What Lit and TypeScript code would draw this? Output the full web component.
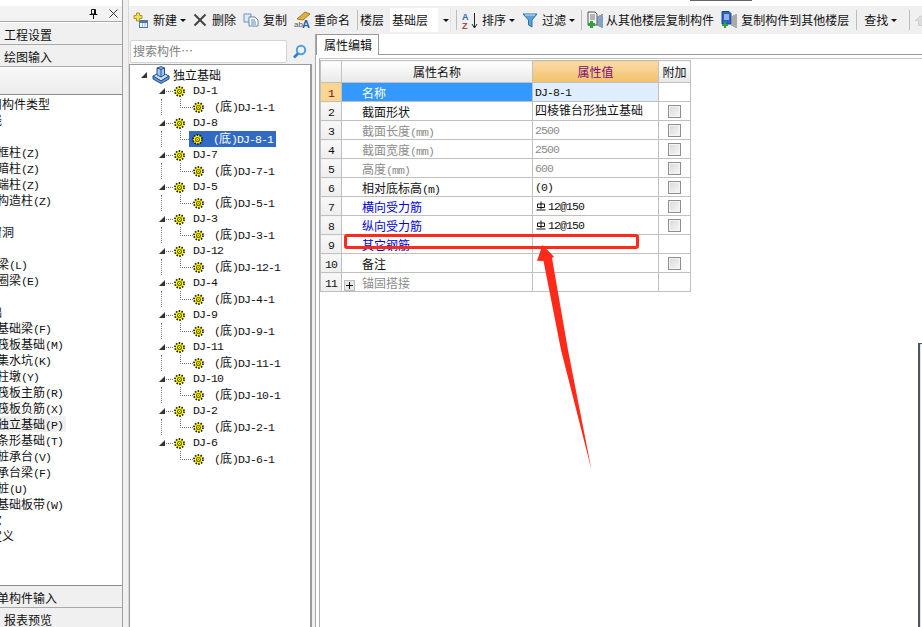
import { LitElement, html, css, svg } from "lit";
import { customElement } from "lit/decorators.js";

const mixed = (t: string) =>
  t.split(/([\x20-\x7e]+)/).map((p, i) => (i % 2 ? html`<span class="l">${p}</span>` : p));

const gear = html`<svg class="gear" width="11" height="11" viewBox="0 0 11 11">
  <circle cx="5.5" cy="5.5" r="4.4" fill="#ffff00"/>
  <circle cx="5.5" cy="5.5" r="4.5" fill="none" stroke="#1c1c10" stroke-width="1.8" stroke-dasharray="1.5 1.33"/>
  <circle cx="5.5" cy="5.5" r="2" fill="#ffff00" stroke="#6e6410" stroke-width="1.1"/>
  <rect x="5" y="5" width="1" height="1" fill="#555"/>
</svg>`;
const tri = html`<svg class="tri" width="6" height="6" viewBox="0 0 6 6"><path d="M6 0V6H0Z" fill="#333"/></svg>`;
const caret = html`<svg class="caret" width="6" height="3" viewBox="0 0 6 3"><path d="M0 0H6L3 3Z" fill="#111"/></svg>`;
const rebar = html`<svg class="rebar" width="10" height="10" viewBox="0 0 10 10" fill="none" stroke="#111">
  <path d="M1.5 3H8.5V6.5H1.5Z"/><path d="M5 0.5V8M0.5 9H9.5"/></svg>`;

const newIcon = html`<svg width="15" height="16" viewBox="0 0 15 16">
  <rect x="6.5" y="8.5" width="8" height="7" fill="#fff" stroke="#4a78b0"/><path d="M7 10H14" stroke="#4a78b0" stroke-width="2"/><path d="M9.5 11V15M12 11V15" stroke="#9ab8d8"/>
  <path d="M3.5 1H6.5V3.5H9V6.5H6.5V9H3.5V6.5H1V3.5H3.5Z" fill="#f7e050" stroke="#a89430"/></svg>`;
const delIcon = html`<svg width="14" height="14" viewBox="0 0 14 14"><path d="M1.5 1.5L12.5 12.5M12.5 1.5L1.5 12.5" stroke="#444" stroke-width="2"/></svg>`;
const copyIcon = html`<svg width="16" height="14" viewBox="0 0 16 14">
  <path d="M1 1H8V9H1Z" fill="#dfeaf6" stroke="#6f93bd"/><path d="M6 4H12L15 7V13H6Z" fill="#fff" stroke="#5c84b4"/>
  <path d="M8 7H12M8 9H13M8 11H13" stroke="#5c84b4"/></svg>`;
const renameIcon = html`<svg width="17" height="18" viewBox="0 0 17 18">
  <path d="M3 8L11 1L16 3L9 9Z" fill="#e0b040" stroke="#a87c20"/>
  <text x="0" y="16" font-size="8" fill="#555" font-family="Liberation Sans">ab</text>
  <text x="8" y="17" font-size="11" font-weight="700" fill="#2f5fa8" font-family="Liberation Sans">A</text></svg>`;
const sortIcon = html`<svg width="16" height="17" viewBox="0 0 16 17">
  <text x="0" y="8" font-size="9" font-weight="700" fill="#3a68a8" font-family="Liberation Sans">A</text>
  <text x="0" y="16.5" font-size="9" font-weight="700" fill="#a04848" font-family="Liberation Sans">Z</text>
  <path d="M12.5 1V15M10 12L12.5 16L15 12" fill="none" stroke="#222"/></svg>`;
const filterIcon = html`<svg width="16" height="15" viewBox="0 0 16 15"><path d="M1 1H15L10 7V14L6.5 12V7Z" fill="#5da2d8" stroke="#2f70a8"/><path d="M3 2H13" stroke="#cfe6f6"/></svg>`;
const fromIcon = html`<svg width="17" height="18" viewBox="0 0 17 18">
  <path d="M1 1H8L10 3V14H1Z" fill="#f2f2f2" stroke="#555"/><path d="M3 4H8M3 6H8M3 8H8" stroke="#777"/>
  <path d="M3 10H6V12H8V15H6V17H3V15H1V12H3Z" fill="#2ea43c"/>
  <path d="M11 5V15M13 4V16M15 3V17" stroke="#5b7fa8" stroke-width="1.4"/></svg>`;
const toIcon = html`<svg width="17" height="18" viewBox="0 0 17 18">
  <path d="M1 0.5H8L10 2.5V13H1Z" fill="#2a62c8" stroke="#1c4494"/><path d="M3 4H8M3 6H8M3 8H8" stroke="#fff"/>
  <path d="M3 11H5V13H7V15H5V17H3V15H1V13H3Z" fill="#2ea43c"/>
  <path d="M11 5V15M13 4V16M15 3V17" stroke="#8c8c8c" stroke-width="1.4"/></svg>`;
const upIcon = html`<svg width="11" height="11" viewBox="0 0 11 11"><path d="M5.5 0.5L10.5 5.5H7.5V10.5H3.5V5.5H0.5Z" fill="#dcdcdc" stroke="#cfcfcf"/></svg>`;
const cubeIcon = html`<svg width="18" height="18" viewBox="0 0 18 18">
  <path d="M1 10L9 6L17 10L9 15Z" fill="#cfe0f4" stroke="#1f4f96"/>
  <path d="M1 10V13L9 17.5L17 13V10L9 15Z" fill="#6a9ad4" stroke="#1f4f96"/>
  <path d="M5 2L9 0.6L12.5 2V9L9 11L5 9Z" fill="#a8c6ea" stroke="#1f4f96"/>
  <path d="M9 3V11M5 2L9 3.4L12.5 2" fill="none" stroke="#1f4f96"/></svg>`;
const searchIcon = html`<svg width="15" height="15" viewBox="0 0 15 15" fill="none">
  <circle cx="9" cy="6" r="4.2" stroke="#4d9fe0" stroke-width="2"/><path d="M6 9.5L2 13.5" stroke="#2f7fc8" stroke-width="2.6"/></svg>`;
const pinIcon = html`<svg width="9" height="10" viewBox="0 0 9 10"><path d="M2.5 0.5H6.5V5H2.5ZM0.5 5.5H8.5M4.5 6V10M5.5 1V5" fill="none" stroke="#111"/></svg>`;
const closeIcon = html`<svg width="9" height="9" viewBox="0 0 9 9"><path d="M0.5 0.5L8.5 8.5M8.5 0.5L0.5 8.5" stroke="#333"/></svg>`;

const list: [number, string][] = [
  [1, "常用构件类型"], [1, "轴线"], [1, "柱"], [2, "框柱(Z)"], [2, "暗柱(Z)"], [2, "端柱(Z)"], [2, "构造柱(Z)"],
  [1, "墙"], [1, "门窗洞"], [1, "梁"], [2, "梁(L)"], [2, "圈梁(E)"], [1, "板"], [1, "基础"],
  [2, "基础梁(F)"], [2, "筏板基础(M)"], [2, "集水坑(K)"], [2, "柱墩(Y)"], [2, "筏板主筋(R)"], [2, "筏板负筋(X)"],
  [2, "独立基础(P)"], [2, "条形基础(T)"], [2, "桩承台(V)"], [2, "承台梁(F)"], [2, "桩(U)"], [2, "基础板带(W)"],
  [1, "其它"], [1, "自定义"],
];
const tree = ["1", "8", "7", "5", "3", "12", "4", "9", "11", "10", "2", "6"];

type Row = [string, string, string, boolean];
const rows: Row[] = [
  ["名称", "DJ-8-1", "sel", false],
  ["截面形状", "四棱锥台形独立基础", "", true],
  ["截面长度(mm)", "2500", "gray", true],
  ["截面宽度(mm)", "2500", "gray", true],
  ["高度(mm)", "600", "gray", true],
  ["相对底标高(m)", "(0)", "", true],
  ["横向受力筋", "@12@150", "blue", true],
  ["纵向受力筋", "@12@150", "blue", true],
  ["其它钢筋", "", "blue", false],
  ["备注", "", "", true],
  ["锚固搭接", "", "gray expand", false],
];

@customElement("app-root")
export class AppRoot extends LitElement {
  static styles = css`
    :host { display: block; position: relative; width: 922px; height: 627px; overflow: hidden; background: #fff;
      font: 12px/16px "Noto Sans CJK SC", "Liberation Sans", sans-serif; color: #111; }
    .l { font: 11.5px/0 "Liberation Mono", monospace; letter-spacing: -0.9px; }
    .app { display: flex; height: 627px; }

    .left { width: 123px; flex: none; padding-top: 6px; display: flex; flex-direction: column; box-sizing: border-box; border-right: 1px solid #a0a0a0; }
    .lhead { height: 15px; flex: none; background: #f3f3f3; border-bottom: 1px solid #a8a8a8; display: flex; align-items: center; justify-content: flex-end; gap: 11px; padding-right: 4px; }
    .ltab { height: 21px; flex: none; background: #f0f0f0; border-bottom: 1px solid #a8a8a8; padding-left: 4px; line-height: 23px; white-space: nowrap; overflow: hidden; }
    .ltab.first { margin-top: 1px; }
    .ltab.clip { padding-left: 0; text-indent: -3px; }
    .lpanel { height: 26px; flex: none; margin-top: 1px; background: linear-gradient(#f8f8f8, #ececec); border-bottom: 1px solid #8c8c8c; }
    .list { height: 491px; flex: none; padding-top: 1px; box-sizing: border-box; overflow: hidden; background: #fff; border-bottom: 1px solid #8c8c8c; }
    .item { height: 16px; line-height: 16px; white-space: nowrap; width: max-content; }
    .item.lv1 { margin-left: -22px; }
    .item.lv2 { margin-left: -3px; }
    .item.on { background: #f0f0f0; border-radius: 2px; padding-right: 3px; }
    .gut { width: 5px; flex: none; background: #f0f0f0; border-right: 1px solid #d8d8d8; }

    .right { flex: 1; min-width: 0; display: flex; flex-direction: column; padding-top: 6px; }
    .toolbar { height: 28px; flex: none; background: #f0f0f0; display: flex; align-items: center; padding-left: 4px; white-space: nowrap; }
    .toolbar > * { flex: none; }
    .btn { display: flex; align-items: center; margin-right: 7px; }
    .btn > svg:first-child { flex: none; margin-right: 5px; }
    .btn.i4 > svg:first-child { margin-right: 4px; }
    .btn.i3 > svg:first-child { margin-right: 3px; }
    .btn.i2 > svg:first-child { margin-right: 2px; }
    .btn.ml2 { margin-left: 2px; }
    .btn.mr6 { margin-right: 6px; }
    .caret { margin-left: 3px; }
    .sep { width: 1px; height: 20px; background: #bdbdbd; margin-right: 3px; }
    .sep.m5 { margin-right: 5px; }
    .sep.m7 { margin-right: 7px; }
    .sep.m2 { margin-right: 2px; }
    .combo { width: 61px; height: 24px; background: #fff; margin: 0 5px 0 6px; display: flex; align-items: center; padding-left: 2px; box-sizing: border-box; justify-content: space-between; }
    .combo span { flex: 1; }
    .combo i { width: 12px; height: 100%; display: flex; align-items: center; justify-content: center; background: #f4f4f4; border-right: 1px solid #e4e4e4; }

    .body { flex: 1; display: flex; min-height: 0; }
    .tcol { width: 183px; flex: none; background: #f0f0f0; display: flex; flex-direction: column; }
    .search { height: 30px; flex: none; display: flex; align-items: center; padding: 4px 0 0 1px; box-sizing: border-box; gap: 5px; }
    .sinput { width: 157px; height: 23px; background: #fff; border: 1px solid #d4d4d4; border-radius: 2px; box-sizing: border-box; color: #808080; line-height: 20px; padding-left: 2px; }
    .tree { flex: 1; background: #fff; border: 1px solid #9a9a9a; border-width: 1px 2px 0 1px; overflow: hidden; padding-top: 1px; }
    .node { height: 16px; display: flex; align-items: center; white-space: nowrap; }
    .root { height: 17px; padding-left: 11px; }
    .root .tri { margin-right: 5px; }
    .root span.t { margin-left: 3px; line-height: 14px; }
    .par { padding-left: 29px; }
    .par .l { line-height: 14px; }
    .dots { width: 7px; border-top: 1px dotted #777; margin: 0 1px; }
    .par .gear { margin-right: 8px; }
    .chi { align-items: stretch; }
    .vl { width: 0; margin-left: 31px; border-left: 1px dotted #888; }
    .vl.none { border-left-color: transparent; }
    .elbow { width: 12px; height: 8px; margin-left: 18px; border-left: 1px dotted #777; border-bottom: 1px dotted #777; flex: none; }
    .chi .gear { align-self: center; }
    .label { margin-left: 10px; padding: 0 6px 0 0; align-self: stretch; line-height: 13px; }
    .hl { display: flex; align-items: center; background: #316ac5; color: #fff; padding-left: 3px; height: 16px; margin-left: -4px; width: 87px; box-sizing: border-box; }
    .hl .label { padding: 0; }

    .gap { width: 4px; flex: none; background: #f0f0f0; border-right: 1px solid #a8a8a8; box-sizing: border-box; }
    .panel { flex: 1; min-width: 0; display: flex; flex-direction: column; position: relative; }
    .tabs { height: 21px; flex: none; display: flex; }
    .tab { width: 63px; height: 21px; box-sizing: border-box; border: 1px solid #9a9a9a; border-bottom: none; line-height: 20px; padding-left: 7px; background: #fff; }
    .tabline { flex: 1; border-bottom: 1px solid #9a9a9a; }
    .grid { flex: 1; margin: 3px 0 0 3px; border-top: 1px solid #c4c4c4; border-left: 1px solid #b0b0b0; padding-top: 1px; position: relative; }
    table { border-collapse: collapse; table-layout: fixed; width: 370px; }
    col.c1 { width: 21px; }
    col.c2 { width: 191px; }
    col.c3 { width: 126px; }
    col.c4 { width: 32px; }
    td, th { border: 1px solid #c0c0c0; padding: 0; font-weight: 400; white-space: nowrap; overflow: hidden; box-sizing: border-box; }
    th { height: 22px; background: linear-gradient(#ffffff, #e8e8e8); line-height: 19px; }
    th.val { background: linear-gradient(#fbdca6, #f2c16a); color: #7a0a7a; }
    .c { height: 18px; line-height: 19px; overflow: hidden; }
    td.n { text-align: center; background: linear-gradient(#f8f8f8, #eeeeee); }
    td.n .c { line-height: 17px; }
    td.n.cur { background: #fcd58f; color: #7a0a30; }
    td.name .c { padding-left: 20px; }
    td.val .c { padding-left: 2px; line-height: 16px; }
    tr.sel td.name { background: #3399ff; color: #fff; }
    tr.sel td.val { background: #deeeff; }
    tr.gray td.name, tr.gray td.val { color: #8c8c8c; }
    tr.blue td.name { color: #0000e0; }
    .plus { display: inline-flex; width: 11px; height: 11px; margin-left: -18px; margin-right: 7px; vertical-align: -1px; border: 1px solid #bdbdbd; background: #e8e8e8; box-sizing: border-box; align-items: center; justify-content: center; }
    .cb { display: block; width: 13px; height: 13px; margin: 3px auto 0; box-sizing: border-box; border: 1px solid #8e8e8e; background: linear-gradient(135deg, #d8d8d8, #f8f8f8); box-shadow: inset 0 0 0 1px #f4f4f4; }
    .rebar { vertical-align: -1px; margin: 0 2px 0 1px; }
    .corner { position: absolute; left: 598px; top: 284px; right: 0; bottom: 0; border: solid #555; border-width: 1px 0 0 2px; background: #fff; box-shadow: inset 1px 1px 0 #dde6f4; }

    .topmark { position: absolute; left: 690px; top: 0; width: 62px; height: 1px; background: #666; }
    .mark { position: absolute; left: 0; top: 0; pointer-events: none; }
  `;

  render() {
    return html`<div class="app">
      <div class="left">
        <div class="lhead">${pinIcon}${closeIcon}</div>
        <div class="ltab first">工程设置</div>
        <div class="ltab">绘图输入</div>
        <div class="lpanel"></div>
        <div class="list">
          ${list.map(([lv, t]) => html`<div class="item lv${lv} ${t.startsWith("独立基础") ? "on" : ""}">${mixed(t)}</div>`)}
        </div>
        <div class="ltab clip">单构件输入</div>
        <div class="ltab">报表预览</div>
      </div>
      <div class="gut"></div>
      <div class="right">
        <div class="toolbar">
          <div class="btn">${newIcon}新建${caret}</div>
          <div class="btn">${delIcon}删除</div>
          <div class="btn i4">${copyIcon}复制</div>
          <div class="btn i3">${renameIcon}重命名</div>
          <div class="sep m2"></div><span>楼层</span>
          <div class="combo"><span>基础层</span><i>${caret}</i></div>
          <div class="sep"></div>
          <div class="btn ml2 i4">${sortIcon}排序${caret}</div>
          <div class="btn i4 mr6">${filterIcon}过滤${caret}</div>
          <div class="sep m5"></div>
          <div class="btn i2">${fromIcon}从其他楼层复制构件</div>
          <div class="btn i3">${toIcon}复制构件到其他楼层</div>
          <div class="sep m7"></div>
          <div class="btn">查找${caret}</div>
          <div class="sep m5"></div>
          ${upIcon}
        </div>
        <div class="body">
          <div class="tcol">
            <div class="search">
              <div class="sinput">搜索构件…</div>
              ${searchIcon}
            </div>
            <div class="tree">
              <div class="node root">${tri}${cubeIcon}<span class="t">独立基础</span></div>
              ${tree.map((n, i) => html`
                <div class="node par">${tri}<span class="dots"></span>${gear}<span class="l">DJ-${n}</span></div>
                <div class="node chi">
                  <span class="vl ${i === tree.length - 1 ? "none" : ""}"></span>
                  <span class="elbow"></span>
                  ${n === "8"
                    ? html`<span class="hl">${gear}<span class="label">${mixed(`(底)DJ-${n}-1`)}</span></span>`
                    : html`${gear}<span class="label">${mixed(`(底)DJ-${n}-1`)}</span>`}
                </div>`)}
            </div>
          </div>
          <div class="gap"></div>
          <div class="panel">
            <div class="tabs"><div class="tab">属性编辑</div><div class="tabline"></div></div>
            <div class="grid">
              <table>
                <colgroup><col class="c1"/><col class="c2"/><col class="c3"/><col class="c4"/></colgroup>
                <thead><tr><th></th><th>属性名称</th><th class="val">属性值</th><th>附加</th></tr></thead>
                <tbody>
                  ${rows.map((r, i) => html`<tr class="${r[2]}">
                    <td class="n ${i === 0 ? "cur" : ""}"><div class="c">${mixed(String(i + 1))}</div></td>
                    <td class="name"><div class="c">${r[2].includes("expand")
                      ? html`<span class="plus"><svg width="7" height="7" viewBox="0 0 7 7"><path d="M3.5 0V7M0 3.5H7" stroke="#111"/></svg></span>`
                      : ""}${mixed(r[0])}</div></td>
                    <td class="val"><div class="c">${r[1].startsWith("@")
                      ? html`${rebar}<span class="l">${r[1].slice(1)}</span>`
                      : mixed(r[1])}</div></td>
                    <td class="x"><div class="c">${r[3] ? html`<span class="cb"></span>` : ""}</div></td>
                  </tr>`)}
                </tbody>
              </table>
              <div class="corner"></div>
            </div>
          </div>
        </div>
      </div>
    </div>
    <div class="topmark"></div>
    <svg class="mark" width="922" height="627" viewBox="0 0 922 627">
      ${svg`<rect x="345.5" y="235.5" width="292" height="12" rx="1.5" fill="none" stroke="#ff2a1a" stroke-width="3"/>
      <path d="M542.5 245L554 256.7L552 258L568 350L591.5 470L561 350L543.5 261L537 260.7Z" fill="#ff2a1a"/>`}
    </svg>`;
  }
}
